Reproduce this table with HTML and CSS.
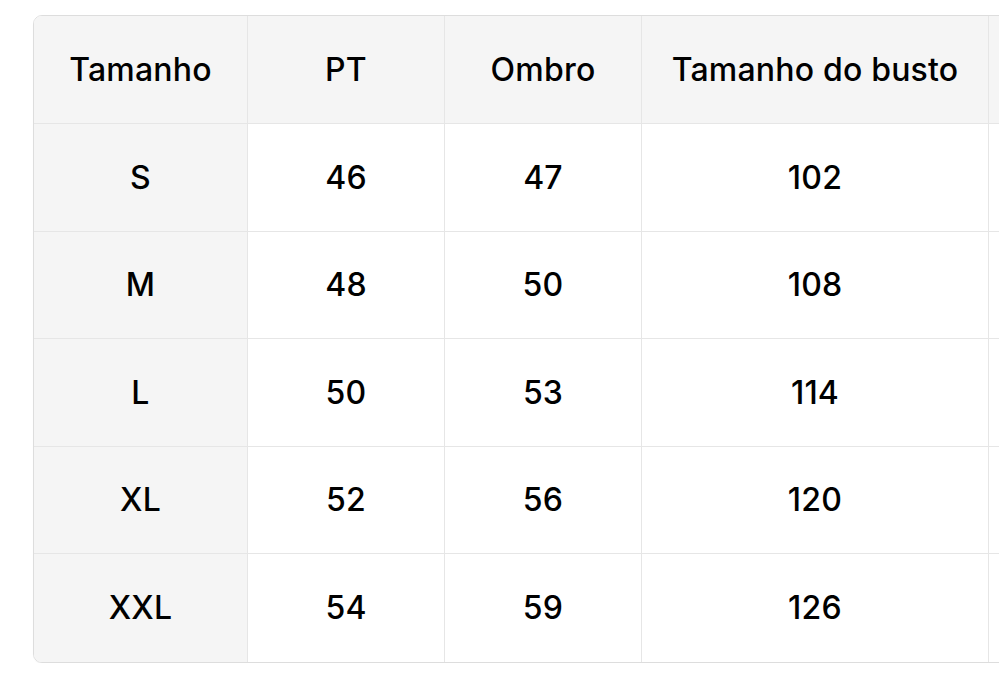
FILE: index.html
```html
<!DOCTYPE html>
<html>
<head>
<meta charset="utf-8">
<link rel="stylesheet" href="styles.css">
</head>
<body>
<div class="wrap">
  <table class="size-table">
    <colgroup>
      <col class="c1"><col class="c2"><col class="c3"><col class="c4"><col class="c5">
    </colgroup>
    <thead>
      <tr><th class="first">Tamanho</th><th>PT</th><th>Ombro</th><th>Tamanho do busto</th><th></th></tr>
    </thead>
    <tbody>
      <tr><td class="first">S</td><td>46</td><td>47</td><td>102</td><td></td></tr>
      <tr><td class="first">M</td><td>48</td><td>50</td><td>108</td><td></td></tr>
      <tr><td class="first">L</td><td>50</td><td>53</td><td>114</td><td></td></tr>
      <tr><td class="first">XL</td><td>52</td><td>56</td><td>120</td><td></td></tr>
      <tr class="last"><td class="first">XXL</td><td>54</td><td>59</td><td>126</td><td></td></tr>
    </tbody>
  </table>
</div>
</body>
</html>
```
FILE: styles.css
```css
html, body {
  margin: 0;
  padding: 0;
  background: #ffffff;
  overflow: hidden;
}
body {
  padding: 15px 0 0 33px;
  font-family: "Inter", "Liberation Sans", sans-serif;
  color: #000000;
}
.wrap {
  width: max-content;
  border: 1px solid #dddddd;
  border-radius: 9px;
  overflow: hidden;
  box-shadow: 0 1px 1px rgba(0, 0, 0, 0.04);
}
.size-table {
  border-collapse: separate;
  border-spacing: 0;
  table-layout: fixed;
  width: 1155px;
}
.c1 { width: 214px; }
.c2 { width: 197px; }
.c3 { width: 197px; }
.c4 { width: 347px; }
.c5 { width: 200px; }
th, td {
  box-sizing: border-box;
  padding: 0;
  text-align: center;
  vertical-align: middle;
  font-size: 32px;
  font-weight: 450;
  letter-spacing: 0.2px;
  border-right: 1px solid #e6e6e6;
  border-bottom: 1px solid #e6e6e6;
  white-space: nowrap;
  overflow: hidden;
}
thead tr { height: 108px; }
tbody tr { height: 107.5px; }
tbody tr.last td { border-bottom: none; }
th { background: #f5f5f5; }
td.first { background: #f5f5f5; }
td { background: #ffffff; }
```
